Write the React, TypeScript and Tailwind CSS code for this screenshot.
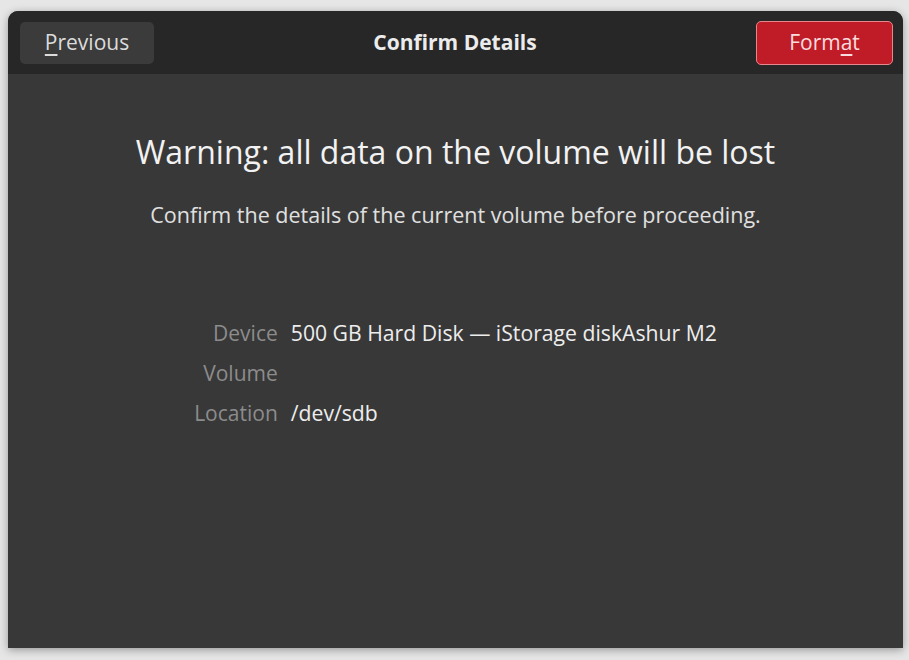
export default function App() {
  const rows: [string, string][] = [
    ['Device', '500 GB Hard Disk — iStorage diskAshur M2'],
    ['Volume', ''],
    ['Location', '/dev/sdb'],
  ];

  return (
    <div className="h-[660px] w-[909px] bg-[#e6e6e6] pt-[11px] pl-[8px] font-['Open_Sans',sans-serif]">
      <div className="flex h-[637px] w-[895px] flex-col overflow-hidden rounded-t-[10px] bg-[#383838] shadow-[0_2px_8px_rgba(0,0,0,0.35)]">
        <div className="flex h-[63px] items-center justify-between bg-[#272727] pl-[12px] pr-[10px]">
          <button className="h-[42px] w-[134px] rounded-[5px] bg-[#3b3b3b] text-[21px] leading-none text-[#dcdcdc]">
            <u className="underline-offset-[4px]">P</u>revious
          </button>
          <div className="text-[21px] font-bold text-[#ececec]">Confirm Details</div>
          <button className="h-[44px] w-[137px] rounded-[5px] border border-[#e6878d] bg-[#c01c28] text-[21px] leading-none text-[#f8dcde]">
            Form<u className="underline-offset-[4px]">a</u>t
          </button>
        </div>

        <div className="flex flex-1 flex-col items-center pt-[58px]">
          <h1 className="text-[32px] leading-[40px] font-normal text-[#f2f2f2]">
            Warning: all data on the volume will be lost
          </h1>
          <p className="mt-[29px] text-[21.5px] leading-[28px] text-[#e0e0e0]">
            Confirm the details of the current volume before proceeding.
          </p>

          <div className="mt-[84px] grid grid-cols-[auto_auto] gap-x-[13px] text-[21px] leading-[40px]">
            {rows.map(([label, value]) => (
              <div key={label} className="contents">
                <div className="text-right text-[#8c8c8c]">{label}</div>
                <div className="text-[21.2px] text-[#ededed]">{value}</div>
              </div>
            ))}
          </div>
        </div>
      </div>
    </div>
  );
}
